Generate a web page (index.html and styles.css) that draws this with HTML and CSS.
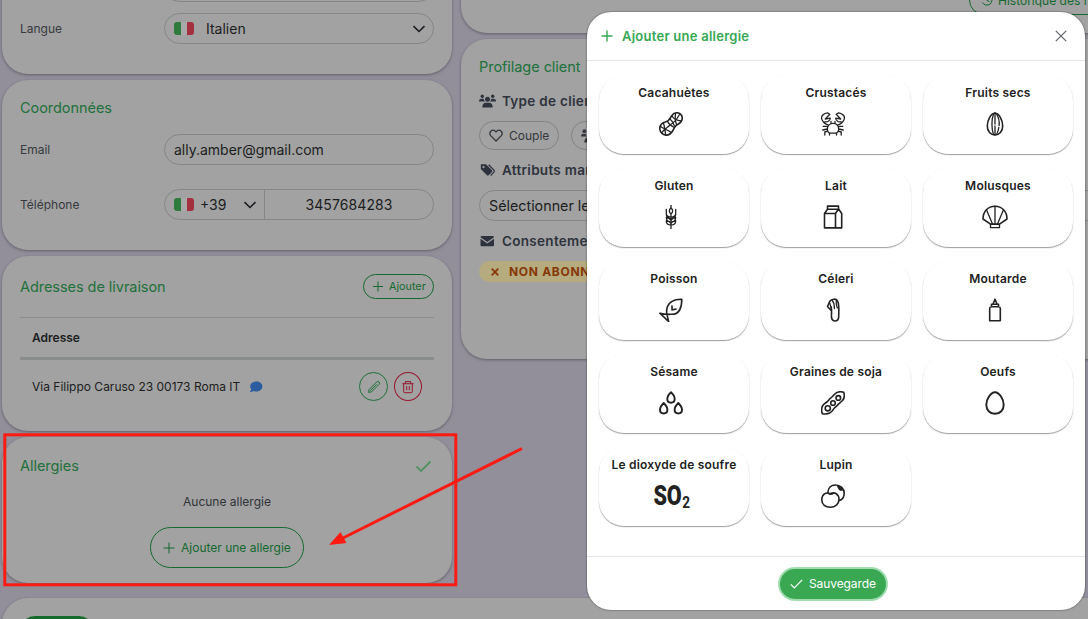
FILE: index.html
```html
<!DOCTYPE html>
<html lang="fr">
<head>
<meta charset="UTF-8" />
<meta name="viewport" content="width=device-width, initial-scale=1" />
<title>Fiche client - Allergies</title>
<link rel="stylesheet" href="styles.css">
</head>
<body>
  <main class="page">
    <div class="columns">
      <div class="col-left">
        <!-- Profile -->
        <section class="card card-profile">
          <div class="form-row"><span class="label"></span><div class="field"></div></div>
          <div class="form-row">
            <span class="label">Langue</span>
            <div class="field">
              <span class="flag"></span>
              <span class="lang-name">Italien</span>
              <svg class="chevron" viewBox="0 0 14 8"><path d="M1.5 1.2 7 6.5 12.500 1.2"/></svg>
            </div>
          </div>
        </section>

        <!-- Contact -->
        <section class="card card-contact">
          <h2 class="card-title">Coordonnées</h2>
          <div class="form-row">
            <span class="label">Email</span>
            <div class="field">ally.amber@gmail.com</div>
          </div>
          <div class="form-row">
            <span class="label">Téléphone</span>
            <div class="field">
              <div class="prefix">
                <span class="flag"></span>
                <span class="prefix-code">+39</span>
                <svg class="chevron" viewBox="0 0 14 8"><path d="M1.5 1.2 7 6.500 12.500 1.2"/></svg>
              </div>
              <span class="phone">3457684283</span>
            </div>
          </div>
        </section>

        <!-- Delivery addresses -->
        <section class="card card-address">
          <div class="title-row">
            <h2 class="card-title">Adresses de livraison</h2>
            <button class="btn-outline btn-small">
              <svg class="icon-plus" viewBox="0 0 12 12"><path d="M6 .5v10M1 5.500h10"/></svg>
              Ajouter
            </button>
          </div>
          <div class="table-head">Adresse</div>
          <div class="table-row">
            <span class="address">Via Filippo Caruso 23 00173 Roma IT</span>
            <svg class="icon-comment" viewBox="0 0 14 12"><path d="M7.200.5C3.700.5 1.200 2.700 1.200 5.400c0 1.200.4 2.100 1.100 2.900C2 9.700 1 10.700.5 11.200c1.800 0 3.100-.6 4-1.200.8.3 1.700.4 2.700.4 3.500 0 6.200-2.200 6.200-5S10.700.5 7.200.5z"/></svg>
            <button class="btn-round btn-edit">
              <svg viewBox="0 0 14 14"><path d="M1.600 12.400 2.100 9.500 9.800 1.800Q10.900.9 12 2 13.100 3.100 12.200 4.200L4.500 11.900ZM3.300 10.700 9.700 4.300"/></svg>
            </button>
            <button class="btn-round btn-delete">
              <svg viewBox="0 0 14 14"><path d="M1.500 3.700h11M4.300 3.500V1.600h5.400v1.900M2.700 3.700v8q0 1 1 1h6.600q1 0 1-1v-8M5.700 6.200v4M8.300 6.200v4"/></svg>
            </button>
          </div>
        </section>

        <!-- Allergies -->
        <section class="card card-allergies">
          <div class="title-row">
            <h2 class="card-title">Allergies</h2>
            <svg class="icon-ok" viewBox="0 0 17 13"><path d="M1.500 6.500 6 11 15.500 1.500"/></svg>
          </div>
          <p class="empty">Aucune allergie</p>
          <button class="btn-outline btn-add">
            <svg class="icon-plus" viewBox="0 0 12 12"><path d="M6 .5v11M.5 6h11"/></svg>
            Ajouter une allergie
          </button>
        </section>
      </div>

      <div class="col-right">
        <section class="card card-history">
          <button class="btn-outline btn-history">
            <svg viewBox="0 0 12 12"><path d="M1.500 3.800A5 5 0 1 1 1.500 8.500M6 3v3.500l2.500 1"/></svg>
            Historique des réservations
          </button>
        </section>

        <!-- Customer profiling -->
        <section class="card card-profiling">
          <h2 class="card-title">Profilage client</h2>
          <h3 class="sub-title">
            <svg viewBox="0 0 17 14"><circle cx="3.300" cy="2.200" r="1.700"/><circle cx="13.700" cy="2.200" r="1.700"/><circle cx="8.500" cy="5.300" r="2.500"/><path d="M0 7.300Q0 4.800 2.500 4.800H4.700Q5 7 6 7.600H0ZM17 7.300Q17 4.800 14.500 4.800H12.300Q12 7 11 7.600H17ZM3.300 13.500Q3.300 8.800 7 8.800H10Q13.700 8.800 13.700 13.500Z"/></svg>
            Type de client
          </h3>
          <div class="pills">
            <span class="pill">
              <svg class="icon-heart" viewBox="0 0 14 13"><path d="M7 12 1.700 6.600C-.8 3.700 3 -.6 6.300 2.200L7 2.900 7.700 2.200C11-.6 14.800 3.700 12.300 6.600Z"/></svg>
              Couple
            </span>
            <span class="pill">
              <svg class="icon-family" viewBox="0 0 17 14"><circle cx="3.300" cy="2.200" r="1.900"/><circle cx="8.500" cy="5.300" r="2.500"/><path d="M0 7.300Q0 4.800 2.500 4.800H4.700Q5 7 6 7.600H0ZM3.300 13.500Q3.300 8.800 7 8.800H10Q13.700 8.800 13.700 13.500Z"/></svg>
              Famille
            </span>
          </div>
          <h3 class="sub-title">
            <svg viewBox="0 0 17 14"><path d="M1.800 1.500V6.100L8 12.300Q8.800 13 9.600 12.300L13 8.900Q13.700 8.100 13 7.300L7 1.300H2ZM4.500 3a1.100 1.100 0 1 1 0 2.200a1.100 1.100 0 1 1 0-2.200z" fill-rule="evenodd"/><path class="tag-back" d="M9.700 1.800l5.200 5.300q.8 1 0 2l-3.300 3.500"/></svg>
            Attributs marketing
          </h3>
          <div class="field">Sélectionner les attributs</div>
          <h3 class="sub-title">
            <svg viewBox="0 0 17 14"><path d="M1.500 3.200Q1.500 2 2.700 2H13.800Q15 2 15 3.200L8.250 8 1.500 3.200ZM1.500 4.800 8.250 9.500 15 4.800V11Q15 12.200 13.800 12.200H2.700Q1.500 12.200 1.500 11Z"/></svg>
            Consentement
          </h3>
          <span class="badge">
            <svg viewBox="0 0 8 8"><path d="M.7.7l6.600 6.600M7.300.7.7 7.300"/></svg>
            NON ABONNÉ
          </span>
        </section>
      </div>
    </div>

    <section class="card card-bottom">
      <span class="tab-active"></span>
    </section>
  </main>

  <!-- Highlighted area and arrow -->
  <svg class="annotation" viewBox="0 0 1088 619">
    <rect x="4.800" y="434.800" width="451" height="150"/>
    <path d="M522 448.500 341 539"/>
    <polygon points="329,545 340.500,532 346.500,543"/>
  </svg>

  <!-- Add allergy dialog -->
  <div class="modal" role="dialog" aria-label="Ajouter une allergie">
    <header class="modal-header">
      <svg class="icon-plus" viewBox="0 0 12 12"><path d="M6 .5v11M.5 6h11"/></svg>
      <h1>Ajouter une allergie</h1>
      <svg class="icon-close" viewBox="0 0 12 12"><path d="M.8.8l10.400 10.400M11.200.8.8 11.200"/></svg>
    </header>
    <div class="modal-body">
      <div class="allergen">
        <span>Cacahuètes</span>
        <svg viewBox="0 0 24 24"><path d="M12.700 3.800C15-.1 20-.1 22.300 3c2 3 .7 7-2.500 8.700-2.600 1.400-3.700 2.300-4.600 4.300-1.400 3.300-2.500 6-6.200 6.900C4.700 23.900.6 20.500.8 16.300c.2-3.800 3-6 6.200-6.600 3.100-.6 3.900-3.200 5.700-5.900z"/><path class="thin" d="M3 20.500C5.500 16.500 8 15.800 10.500 13.500S16 10 18 6.500L20.800 2M1.500 14.500c3 2.500 7 3 10 5.500M4.500 10.800c1 4.500 2 8 2 12M8.500 9.500c1.500 3 3.500 4.500 6.800 6M13 4c1.500 3 5 4.500 9.500 5M16.500 1.500c-.5 4-.5 7.500 1 11M11 7c2 1.500 3.500 4 4.500 7"/></svg>
      </div>
      <div class="allergen">
        <span>Crustacés</span>
        <svg viewBox="0 0 24 24"><path class="thin" d="M6.300 17.500c0-4 2.500-6.200 5.700-6.200s5.700 2.200 5.700 6.200c-.3 2.500-2 3.700-3.500 3.700H9.800c-1.500 0-3.200-1.200-3.500-3.700zM10 11.500V9.500M14 11.500V9.500M7.300 13C4 12 2 10 .8 7.200-.2 4.500 2 1.500 6.300.8l2.500 1.500L4.300 7l5-.8C9 9 6.500 10.300 3.800 9.800M16.700 13c3.300-1 5.300-3 6.500-5.800 1-2.700-1.200-5.700-5.500-6.400l-2.500 1.500L19.700 7l-5-.8c.3 2.800 2.800 4.100 5.500 3.600M6.200 14.300H2.200M6.200 17 1.800 18M6.700 19.200 3.800 20v3M8.500 21v2M17.800 14.300h4M17.800 17l4.400 1M17.300 19.200l2.900.8v3M15.500 21v2"/></svg>
      </div>
      <div class="allergen">
        <span>Fruits secs</span>
        <svg viewBox="0 0 24 24"><path d="M12 1C8 1.300 4.300 8 4.300 14c0 5.500 3.500 9 7.700 9s7.700-3.500 7.700-9C19.700 8 16 1.300 12 1z"/><path class="thin" d="M12 1v11M12 14v9M10.500 2C8.300 8 8.500 17 10.500 22.500M13.500 2c2.500 4 3 8 2.600 11.500M15.800 15.500c-.3 3-1 5-2.300 7"/></svg>
      </div>
      <div class="allergen">
        <span>Gluten</span>
        <svg viewBox="0 0 24 24"><path class="thin" d="M12 .3v3M12 9v14.700M12 2.800C9.800 5 9.800 7 12 9c2.200-2 2.200-4 0-6.200zM7.300 4.500v4C7.300 11 10 12 12 12.200M16.700 4.500v4c0 2.500-2.700 3.500-4.700 3.700M7.300 9c0 3 2 4.500 4.700 5M16.700 9c0 3-2 4.500-4.700 5M7.300 12.500C7.500 16 9.500 17 12 17.200M16.700 12.500c-.2 3.500-2.200 4.500-4.700 4.700M7.300 12.500c2.500 0 4 1.500 4.700 3M16.700 12.500c-2.500 0-4 1.500-4.700 3M7.300 16C7.300 19.500 9.500 20 12 20M16.700 16c0 3.500-2.200 4-4.700 4M7.300 16c2.500 0 4 1 4.700 2.500M16.700 16c-2.500 0-4 1-4.700 2.500"/></svg>
      </div>
      <div class="allergen">
        <span>Lait</span>
        <svg viewBox="0 0 24 24"><path d="M3.500 8.500V22.900H20.700V8.500L17.800 4.300H6.500L3.500 8.500H14.500V22.900M14.500 8.500 17.200 4.300M6.500 4.300V1.100H17.500V4.300"/></svg>
      </div>
      <div class="allergen">
        <span>Molusques</span>
        <svg class="wide" viewBox="0 0 26 24"><path d="M8.500 19.200 1 14C1 6.500 6 1.200 13 1.200S25 6.500 25 14L17.500 19.200Z"/><path class="thin" d="M8.500 19.200v3.500h9v-3.500zM13 1.200V19M10.500 19 4.700 5.300M15.500 19 21.300 5.300"/></svg>
      </div>
      <div class="allergen">
        <span>Poisson</span>
        <svg viewBox="0 0 24 24"><path d="M22.800 1.200C22.800 9 20.500 16.300 13 16.300c-3.200 0-7.200.4-12.200-1.100L9.600 23.500C9 20 8.200 18.500 7.700 15 7 5.500 13.500 1 22.800 1.200zM13 8v4l4-1"/></svg>
      </div>
      <div class="allergen">
        <span>Céleri</span>
        <svg viewBox="0 0 24 24"><path d="M8.800 3.300C10.500.8 15 .3 16.500 2.800c2 4 1.300 9 1.200 15.700-.1 6-7.300 6-7.300 0 .1-3.500.5-6.500-.2-9.500M10.200 12.500 6.500 8.500l2.300-5.200"/><path class="thin" d="M8.500 4.800l1.700 5M13.400 10.500c0-4-.5-6-2.200-8M16.300 10c-1-3-1.500-5-1-8.200"/></svg>
      </div>
      <div class="allergen">
        <span>Moutarde</span>
        <svg viewBox="0 0 24 24"><path d="M6.700 22.700V10.200Q6.700 9 8.500 8.700V6.200H15.500V8.700Q17.300 9 17.300 10.200V22.700ZM8.500 8.700H15.500M10 6 12 1.200 14 6"/></svg>
      </div>
      <div class="allergen">
        <span>Sésame</span>
        <svg viewBox="0 0 24 24"><path class="bold" d="M12 1.200C9.700 3.500 8.300 6 8.300 8c0 2.300 1.600 3.700 3.700 3.700s3.700-1.400 3.700-3.700c0-2-1.400-4.500-3.700-6.800zM4.700 12C2.400 14.300 1 16.800 1 18.800c0 2.300 1.600 3.700 3.700 3.700s3.700-1.400 3.700-3.700c0-2-1.400-4.500-3.700-6.800zM19.300 12c-2.300 2.300-3.700 4.800-3.700 6.800 0 2.300 1.600 3.700 3.700 3.700s3.700-1.400 3.700-3.700c0-2-1.400-4.500-3.700-6.800z"/></svg>
      </div>
      <div class="allergen">
        <span>Graines de soja</span>
        <svg viewBox="0 0 24 24"><path d="M13.300 3.500C16 .5 19.500.3 22.700 1.300c1 3 .8 6.500-1.700 8.700-1.700 1.500-2.700 1.800-3.700 3.300-1.300 2-2.500 2.200-3.900 3.700-1.400 1.500-2 4-4.700 5.100-2.400 1-6.400 1.300-7.200.5-1-1-1.300-4.500-.2-7.200 1.300-3 3.700-3.400 5.300-5 1.500-1.600 1.500-2.400 3.300-3.500 1.600-1 2.200-2 3.400-3.400z"/><circle cx="6.800" cy="17.300" r="2.600"/><circle cx="12" cy="12" r="2.300"/><circle cx="17.300" cy="6.900" r="2.300"/></svg>
      </div>
      <div class="allergen">
        <span>Oeufs</span>
        <svg viewBox="0 0 24 24"><path class="bold" d="M12 1.200C7.500 1.200 3.300 8.500 3.300 13.700c0 5.300 3.500 9.100 8.700 9.100s8.700-3.800 8.700-9.100C20.700 8.500 16.500 1.200 12 1.200z"/></svg>
      </div>
      <div class="allergen">
        <span>Le dioxyde de soufre</span>
        <div class="so2">SO<small>2</small></div>
      </div>
      <div class="allergen">
        <span>Lupin</span>
        <svg viewBox="0 0 24 24"><path d="M6.800 9.300C6.800 4 10 1 14.500 1c5 0 8.700 3.500 8.700 8 0 4.700-2.200 7-5.500 7.700"/><path d="M9.300 9.800C5 7.500.8 10.500.8 16c0 4.500 3.700 7.200 8.500 7.200s8.700-3 8.700-7.700C18 10 13.500 7.500 9.300 9.800zM7 9.200q2.500 1.800 5 .4"/><path class="bold" d="M17 2.500q3 .4 4.200 3.300-1.700.3-2.700-.8Q17.500 3.700 17 2.500z"/></svg>
      </div>
    </div>
    <footer class="modal-footer">
      <button class="btn-save">
        <svg viewBox="0 0 13 10"><path d="M.8 5.300 4.300 8.800 12.200.8"/></svg>
        Sauvegarde
      </button>
    </footer>
  </div>
</body>
</html>
```

FILE: styles.css
```css
/* Reset and base styles */
* {
  margin: 0;
  padding: 0;
  box-sizing: border-box;
}
body {
  font-family: Inter, "Liberation Sans", sans-serif;
  font-size: 12px;
  background: #928f9b;
  color: #1b1d20;
  height: 619px;
  overflow: hidden;
}
button {
  font-family: inherit;
  background: none;
  cursor: pointer;
}
svg {
  display: block;
  flex: none;
  fill: none;
  stroke: currentColor;
}

/* Page behind the dialog */
.page {
  height: 619px;
  overflow: hidden;
  padding-left: 2px;
}
.columns {
  display: grid;
  grid-template-columns: 450px 680px;
  gap: 9px;
  height: 598px;
}
.col-left, .col-right {
  display: flex;
  flex-direction: column;
  gap: 6px;
}
.card {
  flex: none;
  background: #a2a2a2;
  border-radius: 26px;
  padding: 18px;
  box-shadow: 0 1px 3px rgb(0 0 0 / 0.35);
}
.card-title {
  font-size: 14.500px;
  font-weight: 400;
  line-height: 20px;
  letter-spacing: -0.05px;
  color: #20713a;
}
.title-row {
  display: flex;
  align-items: center;
  justify-content: space-between;
}

/* Form fields */
.form-row {
  display: flex;
  align-items: center;
  height: 31px;
  margin-bottom: 24px;
}
.form-row:last-child {
  margin-bottom: 0;
}
.label {
  width: 144px;
  color: #36393d;
}
.field {
  flex: 1;
  display: flex;
  align-items: center;
  height: 31px;
  padding: 0 9px;
  border: 1px solid #83878a;
  border-radius: 16px;
  font-size: 14px;
}
.flag {
  width: 20px;
  height: 13px;
  border-radius: 3px;
  background: linear-gradient(to right, #2f7a3d 0 33%, #a9a9a9 33% 66%, #a4303f 66%);
}
.lang-name {
  margin-left: 12px;
}
.chevron {
  width: 14px;
  height: 8px;
  margin-left: auto;
  margin-right: -2px;
  stroke-width: 1.600;
}
.prefix {
  display: flex;
  align-items: center;
  width: 91px;
  height: 29px;
  border-right: 1px solid #83878a;
}
.prefix-code {
  margin-left: 6px;
}
.prefix .chevron {
  margin-right: 7px;
}
.phone {
  flex: 1;
  padding-left: 9px;
  text-align: center;
  letter-spacing: 0.1px;
}

/* Left column */
.card-profile {
  height: 115px;
  margin-top: -41px;
  padding-top: 0;
}
.card-profile .form-row {
  margin-bottom: 12px;
}
.card-profile .form-row:first-child {
  height: 43px;
  margin-bottom: 11px;
  align-items: flex-end;
}
.card-contact {
  height: 170px;
}
.card-contact .card-title {
  margin-bottom: 16px;
}
.card-address {
  height: 175px;
}
.card-address .title-row {
  height: 25px;
  margin-bottom: 18px;
}
.btn-outline {
  display: flex;
  flex: none;
  align-items: center;
  color: #14692f;
  border: 1px solid #14692f;
  border-radius: 21px;
}
.icon-plus {
  width: 12px;
  height: 12px;
}
.btn-small {
  width: 71px;
  height: 25px;
  padding-left: 8px;
  gap: 5px;
  font-size: 10.800px;
}
.table-head {
  height: 43px;
  border-top: 1px solid #888c8e;
  border-bottom: 3px solid #898d8e;
  padding-left: 12px;
  line-height: 40px;
  font-weight: 600;
}
.table-row {
  display: flex;
  align-items: center;
  height: 53px;
  padding: 0 12px;
}
.icon-comment {
  width: 14px;
  height: 12px;
  margin-left: 9px;
  margin-right: auto;
  fill: #2a5c9f;
  stroke: none;
}
.btn-round {
  display: flex;
  align-items: center;
  justify-content: center;
  width: 29px;
  height: 29px;
  border: 1px solid;
  border-radius: 50%;
}
.btn-round svg {
  width: 14px;
  height: 14px;
}
.btn-edit {
  color: #1e7138;
}
.btn-delete {
  width: 28px;
  margin-left: 6px;
  color: #96172f;
}
.card-allergies {
  display: flex;
  flex-direction: column;
  height: 146px;
  padding-top: 19px;
}
.icon-ok {
  width: 17px;
  height: 13px;
  margin-right: 2px;
  color: #519263;
  stroke-width: 1.800;
}
.empty {
  margin-top: 16px;
  line-height: 20px;
  text-align: center;
  color: #303338;
}
.btn-add {
  align-self: center;
  width: 154px;
  height: 41px;
  margin-top: 15px;
  padding-left: 12px;
  gap: 6px;
  font-size: 12px;
  white-space: nowrap;
}

/* Right column */
.card-history {
  height: 133px;
  margin-top: -100px;
  padding-top: 85px;
}
.btn-history {
  width: 180px;
  height: 30px;
  margin-left: 490px;
  padding-left: 11px;
  gap: 5px;
  font-size: 12px;
  white-space: nowrap;
}
.btn-history svg {
  width: 12px;
  height: 12px;
}
.card-profiling {
  height: 320px;
}
.card-profiling .field {
  font-size: 14.300px;
}
.sub-title {
  display: flex;
  align-items: center;
  gap: 6px;
  height: 40px;
  font-size: 13.500px;
  font-weight: 600;
  letter-spacing: 0.3px;
  color: #2e323c;
}
.card-profiling .card-title {
  margin-bottom: 4px;
}
.sub-title svg {
  width: 17px;
  height: 14px;
  fill: currentColor;
  stroke: none;
}
.sub-title .tag-back {
  fill: none;
  stroke: currentColor;
  stroke-width: 1.300;
}
.pills {
  display: flex;
  gap: 12px;
}
.pill {
  display: flex;
  align-items: center;
  gap: 6px;
  height: 29px;
  padding: 0 9px;
  border: 1px solid #838383;
  border-radius: 15px;
  color: #34373b;
}
.icon-heart {
  width: 14px;
  height: 13px;
  stroke-width: 1.300;
}
.icon-family {
  width: 17px;
  height: 14px;
  fill: currentColor;
  stroke: none;
}
.badge {
  display: flex;
  align-items: center;
  gap: 10px;
  width: 150px;
  height: 21px;
  padding-left: 12px;
  border-radius: 11px;
  background: #b5ab7e;
  color: #863708;
  font-size: 12px;
  font-weight: 700;
  letter-spacing: 0.7px;
}
.badge svg {
  width: 8px;
  height: 8px;
  stroke-width: 1.700;
}
.card-bottom {
  width: 1140px;
  height: 100px;
}
.tab-active {
  display: block;
  width: 74px;
  height: 30px;
  border-radius: 15px;
  background: #156b2b;
}

/* Annotation drawn over the page */
.annotation {
  position: absolute;
  left: 0;
  top: 0;
  width: 1088px;
  height: 619px;
  stroke: #fb1b13;
  stroke-width: 3;
}
.annotation polygon {
  fill: #fb1b13;
  stroke: none;
}

/* Dialog */
.modal {
  position: absolute;
  left: 587px;
  top: 12px;
  display: flex;
  flex-direction: column;
  width: 498px;
  height: 598px;
  background: #fff;
  border-radius: 24px;
  box-shadow: 0 0 2px rgb(0 0 0 / 0.6);
}
.modal-header {
  display: flex;
  align-items: center;
  height: 49px;
  padding: 0 18px 0 14px;
  border-bottom: 1px solid #e4e5e7;
  color: #35a853;
}
.modal-header .icon-plus {
  stroke-width: 1.400;
}
.modal-header h1 {
  margin-left: 9px;
  font-size: 13px;
  font-weight: 600;
  letter-spacing: 0.25px;
}
.icon-close {
  width: 12px;
  height: 12px;
  margin-left: auto;
  color: #5f6368;
  stroke-width: 1.200;
}
.modal-body {
  flex: 1;
  display: grid;
  grid-template-columns: repeat(3, 150px);
  grid-auto-rows: 79px;
  align-content: start;
  gap: 14px 12px;
  padding: 14px 12px;
}
.allergen {
  display: flex;
  flex-direction: column;
  align-items: center;
  padding-top: 9px;
  border-radius: 25px;
  box-shadow: 0 1px 1px rgb(0 0 0 / 0.35), 0 1px 2px rgb(0 0 0 / 0.06);
  color: #222;
  font-weight: 600;
  letter-spacing: 0.2px;
  line-height: 18px;
  white-space: nowrap;
}
.allergen svg {
  width: 24px;
  height: 24px;
  margin-top: 10px;
  margin-right: 6px;
  stroke-width: 1.600;
  stroke-linecap: round;
  stroke-linejoin: round;
}
.allergen svg.wide {
  width: 26px;
}
.allergen .thin {
  stroke-width: 1.300;
}
.allergen .bold {
  stroke-width: 1.900;
}
.so2 {
  display: flex;
  align-items: baseline;
  gap: 1px;
  height: 28px;
  margin-top: 8px;
  margin-right: 5px;
  font-family: Roboto, sans-serif;
  font-size: 27px;
  font-weight: 900;
  line-height: 28px;
  letter-spacing: -0.3px;
  transform: scaleX(0.8);
}
.so2 small {
  font-size: 17px;
  font-weight: 700;
  line-height: 17px;
  transform: translateY(3px);
}
.modal-footer {
  display: flex;
  align-items: center;
  justify-content: center;
  height: 54px;
  border-top: 1px solid #e4e5e7;
  border-radius: 0 0 24px 24px;
}
.btn-save {
  display: flex;
  align-items: center;
  gap: 6px;
  width: 106px;
  height: 30px;
  margin-right: 6px;
  padding-left: 10px;
  border: none;
  border-radius: 15px;
  background: #3aa853;
  box-shadow: 0 0 0 2px #a0dcaf;
  color: #fff;
  font-size: 12px;
  letter-spacing: -0.1px;
}
.btn-save svg {
  width: 13px;
  height: 10px;
  stroke-width: 1.200;
}
```
